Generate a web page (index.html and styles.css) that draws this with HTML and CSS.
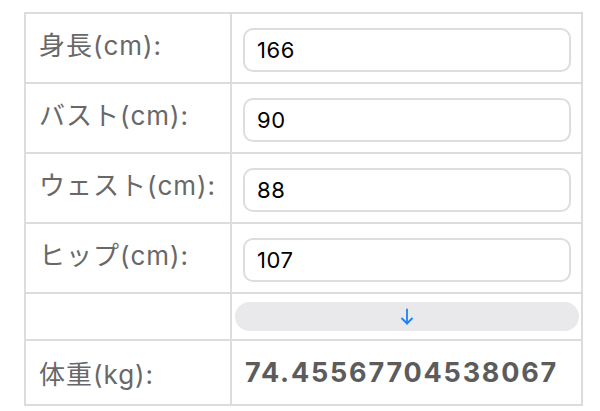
FILE: index.html
```html
<!DOCTYPE html>
<html lang="ja">
<head>
<meta charset="utf-8">
<title>体重計算</title>
<link rel="stylesheet" href="styles.css">
</head>
<body>
<div class="sheet">
  <div class="label">身長(cm):</div>
  <div class="field"><input class="input" type="text" value="166"></div>
  <div class="label">バスト(cm):</div>
  <div class="field"><input class="input" type="text" value="90"></div>
  <div class="label">ウェスト(cm):</div>
  <div class="field"><input class="input" type="text" value="88"></div>
  <div class="label">ヒップ(cm):</div>
  <div class="field"><input class="input" type="text" value="107"></div>
  <div class="blank"></div>
  <div class="action">
    <button class="btn" type="button" aria-label="計算">
      <svg class="arrow" width="12" height="17" viewBox="0 0 12 17" fill="none" stroke="currentColor" stroke-width="1.8" stroke-linecap="round" stroke-linejoin="round"><path d="M6 1.5V15.5"/><path d="M1 10.5L6 15.5L11 10.5"/></svg>
    </button>
  </div>
  <div class="label result-label">体重(kg):</div>
  <div class="result">74.45567704538067</div>
</div>
</body>
</html>
```
FILE: styles.css
```css
html, body {
  margin: 0;
  padding: 0;
  background: #ffffff;
}
body {
  font-family: Inter, "Noto Sans CJK JP", sans-serif;
}
.sheet {
  display: grid;
  grid-template-columns: 204px 349px;
  grid-template-rows: 68px 68px 68px 68px 45px 63px;
  gap: 2px;
  padding: 2px;
  background: #dcdcdc;
  width: fit-content;
  margin: 12px 0 0 24px;
}
.sheet > div {
  background: #ffffff;
}
.label {
  display: flex;
  align-items: center;
  padding: 0 0 10px 13px;
  font-size: 26px;
  letter-spacing: 1px;
  color: #686868;
  white-space: nowrap;
}
.result-label {
  padding-bottom: 0;
}
.field {
  padding: 14px 10px 0 11px;
}
.input {
  box-sizing: border-box;
  display: block;
  width: 100%;
  height: 44px;
  margin: 0;
  border: 2px solid #dddddd;
  border-radius: 10px;
  padding: 0 12px;
  font-family: Inter, sans-serif;
  font-size: 22px;
  letter-spacing: 0.6px;
  color: #000000;
  background: #ffffff;
  outline: none;
}
.action {
  padding: 8px 2px 0 3px;
}
.btn {
  display: flex;
  align-items: center;
  justify-content: center;
  width: 100%;
  height: 29px;
  margin: 0;
  padding: 0;
  border: none;
  border-radius: 15px;
  background: #e9e9eb;
  color: #1a82f7;
}
.arrow {
  display: block;
}
.result {
  display: flex;
  align-items: center;
  padding-left: 13px;
  font-size: 27px;
  font-weight: 700;
  letter-spacing: 1.8px;
  color: #5c5c5c;
}
```
